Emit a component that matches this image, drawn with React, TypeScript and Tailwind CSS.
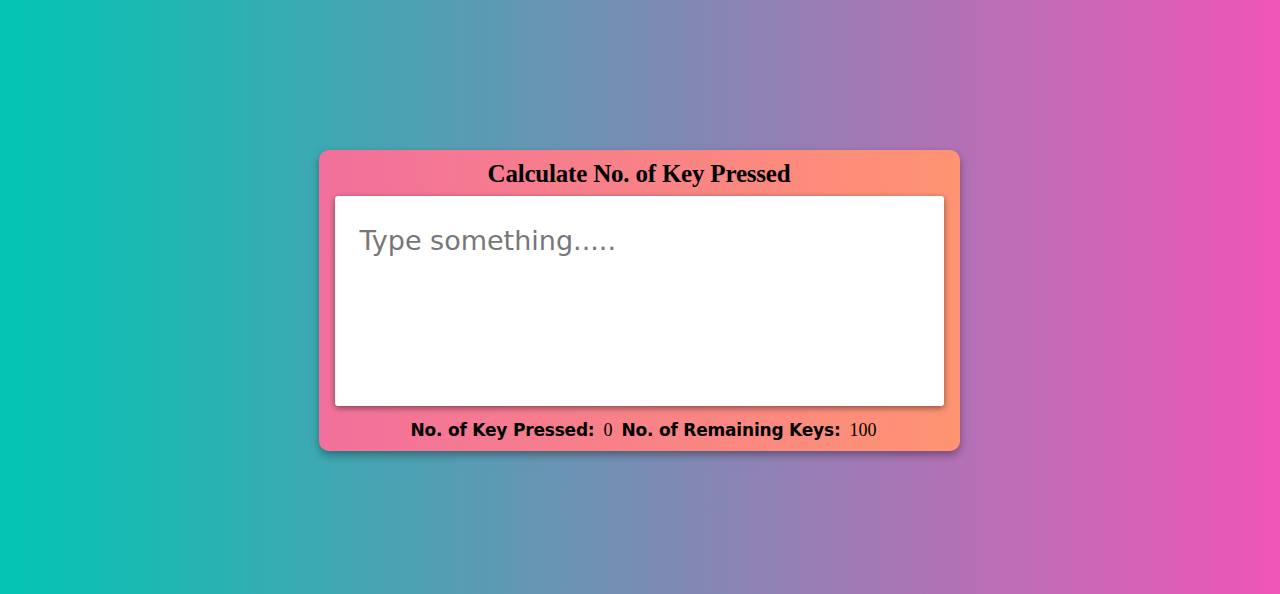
import { useState } from 'react';

const LIMIT = 100;

export default function App() {
  const [text, setText] = useState('');

  return (
    <div className="min-h-screen w-full flex items-center justify-center pt-[7px] pr-[2px] bg-[linear-gradient(to_right,#02c5b2,#ef55b6)]">
      <div className="w-[641px] h-[301px] rounded-[10px] px-4 pt-[9px] bg-[linear-gradient(to_right,#f2709c,#ff9472)] shadow-[0_4px_8px_rgba(0,0,0,0.35)] flex flex-col">
        <h1 className="text-center text-[25px] leading-[30px] font-bold text-black font-['Liberation_Serif',serif] tracking-[-0.2px]">
          Calculate No. of Key Pressed
        </h1>
        <textarea
          value={text}
          maxLength={LIMIT}
          onChange={(e) => setText(e.target.value)}
          placeholder="Type something....."
          className="mt-[7px] h-[210px] w-full resize-none rounded-[3px] bg-white pl-[25px] pr-6 pt-[27px] pb-4 text-[27px] leading-[36px] text-gray-700 placeholder:text-[#777] font-['DejaVu_Sans',sans-serif] outline-none shadow-[0_2px_6px_rgba(0,0,0,0.45)]"
        />
        <div className="mt-[12px] pl-[9px] flex items-baseline justify-center gap-[9px] text-[17px] leading-[24px] text-black">
          <span className="font-bold font-['DejaVu_Sans',sans-serif] tracking-[-0.2px]">No. of Key Pressed:</span>
          <span className="font-['Liberation_Serif',serif] text-[18px]">{text.length}</span>
          <span className="font-bold font-['DejaVu_Sans',sans-serif] tracking-[-0.2px]">No. of Remaining Keys:</span>
          <span className="font-['Liberation_Serif',serif] text-[18px]">{LIMIT - text.length}</span>
        </div>
      </div>
    </div>
  );
}
